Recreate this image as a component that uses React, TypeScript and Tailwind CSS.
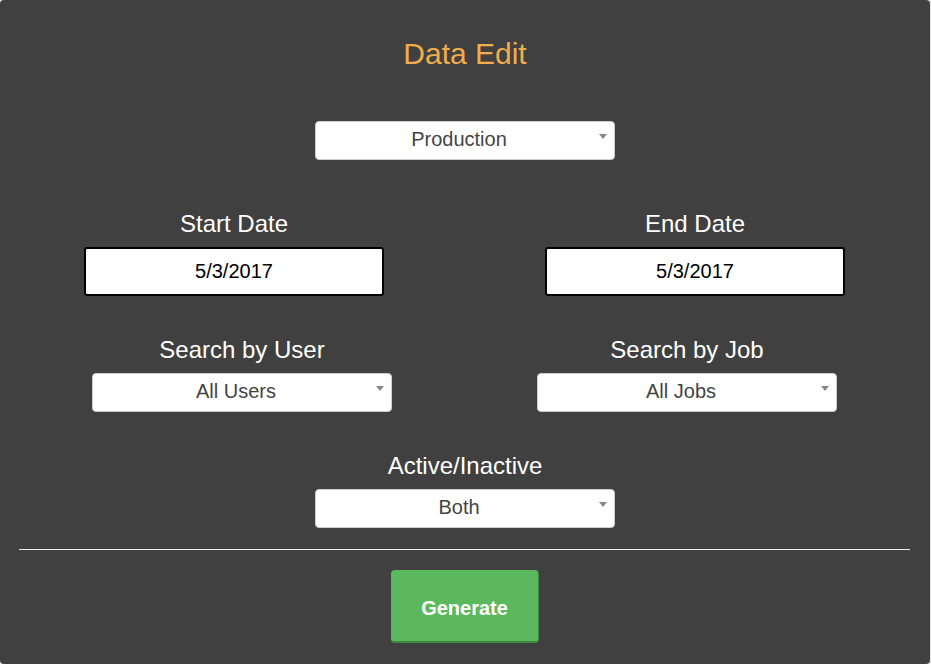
const font = { fontFamily: '"Liberation Sans", Arial, sans-serif' };

function FakeSelect({ value }: { value: string }) {
    return (
        <div className="relative w-[300px] h-[39px] bg-white rounded-[4px] border border-[#cccccc] flex items-center justify-center pl-[8px] pr-[20px] pb-[3px]">
            <span className="text-[20px] text-[#444444] leading-none">{value}</span>
            {/* little caret like select2 */}
            <span className="absolute right-[7px] top-[12px] w-0 h-0 border-l-[4px] border-r-[4px] border-t-[5px] border-l-transparent border-r-transparent border-t-[#888888]" />
        </div>
    );
}

function DateBox({ value }: { value: string }) {
    return (
        <div className="w-[300px] h-[49px] bg-white border-2 border-black rounded-[3px] flex items-center justify-center pb-[1px]">
            <span className="text-[20px] text-black leading-none">{value}</span>
        </div>
    );
}

function Field({ label, children }: { label: string; children: React.ReactNode }) {
    return (
        <div className="flex flex-col items-center w-[300px]">
            <div className="text-[24px] leading-[28px] text-white">{label}</div>
            <div className="mt-[9px]">{children}</div>
        </div>
    );
}

export default function App() {
    return (
        <div className="w-[931px] h-[664px] bg-[#e5e5e5]" style={font}>
            <div className="w-[930px] h-[664px] bg-[#404040] rounded-[4px] flex flex-col items-center">
                <h1 className="pt-[36px] text-[30px] leading-[36px] text-[#f0ad4e]">Data Edit</h1>

                <div className="mt-[49px]">
                    <FakeSelect value="Production" />
                </div>

                {/* dates */}
                <div className="w-full mt-[50px] pl-[84px] pr-[85px] flex justify-between">
                    <Field label="Start Date">
                        <DateBox value="5/3/2017" />
                    </Field>
                    <Field label="End Date">
                        <DateBox value="5/3/2017" />
                    </Field>
                </div>

                {/* user / job filters */}
                <div className="w-full mt-[40px] pl-[92px] pr-[93px] flex justify-between">
                    <Field label="Search by User">
                        <FakeSelect value="All Users" />
                    </Field>
                    <Field label="Search by Job">
                        <FakeSelect value="All Jobs" />
                    </Field>
                </div>

                <div className="mt-[40px]">
                    <Field label="Active/Inactive">
                        <FakeSelect value="Both" />
                    </Field>
                </div>

                <hr className="w-[891px] mt-[21px] mr-[2px] border-0 border-t border-[#eeeeee]" />

                <button className="mt-[20px] w-[148px] h-[73px] pt-[4px] bg-[#5cb85c] rounded-[4px] border-b-2 border-r border-[#3d8b3d] text-white font-bold text-[20px]">
                    Generate
                </button>
            </div>
        </div>
    );
}
